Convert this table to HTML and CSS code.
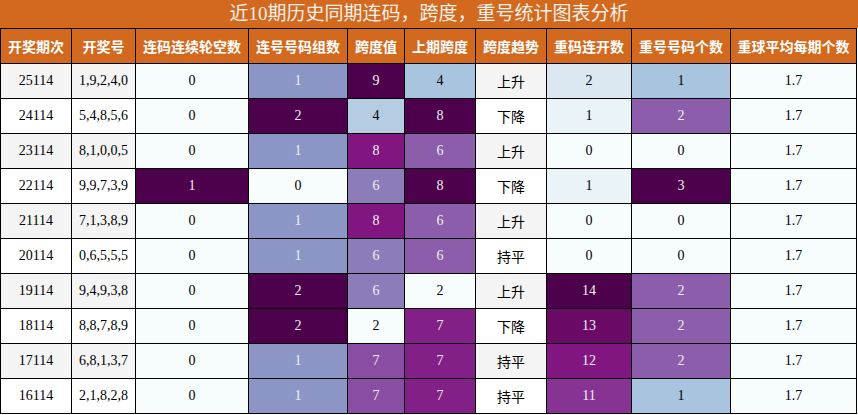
FILE: index.html
```html
<!DOCTYPE html>
<html lang="zh">
<head>
<meta charset="utf-8">
<title>近10期历史同期连码，跨度，重号统计图表分析</title>
<link rel="stylesheet" href="styles.css">
</head>
<body>
<div class="wrap">
  <div class="title">近10期历史同期连码，跨度，重号统计图表分析</div>
  <table class="grid">
    <colgroup>
      <col class="c1"><col class="c2"><col class="c3"><col class="c4"><col class="c5">
      <col class="c6"><col class="c7"><col class="c8"><col class="c9"><col class="c10">
    </colgroup>
    <thead>
      <tr>
        <th>开奖期次</th><th>开奖号</th><th>连码连续轮空数</th><th>连号号码组数</th><th>跨度值</th>
        <th>上期跨度</th><th>跨度趋势</th><th>重码连开数</th><th>重号号码个数</th><th>重球平均每期个数</th>
      </tr>
    </thead>
    <tbody>
      <tr class="odd">
        <td class="s">25114</td><td class="s">1,9,2,4,0</td><td class="b0">0</td><td class="b50 lt">1</td><td class="b100 lt">9</td>
        <td class="b33">4</td><td class="s cjk">上升</td><td class="b14">2</td><td class="b33">1</td><td class="b0">1.7</td>
      </tr>
      <tr>
        <td class="s">24114</td><td class="s">5,4,8,5,6</td><td class="b0">0</td><td class="b100 lt">2</td><td class="b29">4</td>
        <td class="b100 lt">8</td><td class="s cjk">下降</td><td class="b07">1</td><td class="b67 lt">2</td><td class="b0">1.7</td>
      </tr>
      <tr class="odd">
        <td class="s">23114</td><td class="s">8,1,0,0,5</td><td class="b0">0</td><td class="b50 lt">1</td><td class="b86 lt">8</td>
        <td class="b67 lt">6</td><td class="s cjk">上升</td><td class="b0">0</td><td class="b0">0</td><td class="b0">1.7</td>
      </tr>
      <tr>
        <td class="s">22114</td><td class="s">9,9,7,3,9</td><td class="b100 lt">1</td><td class="b0">0</td><td class="b57 lt">6</td>
        <td class="b100 lt">8</td><td class="s cjk">下降</td><td class="b07">1</td><td class="b100 lt">3</td><td class="b0">1.7</td>
      </tr>
      <tr class="odd">
        <td class="s">21114</td><td class="s">7,1,3,8,9</td><td class="b0">0</td><td class="b50 lt">1</td><td class="b86 lt">8</td>
        <td class="b67 lt">6</td><td class="s cjk">上升</td><td class="b0">0</td><td class="b0">0</td><td class="b0">1.7</td>
      </tr>
      <tr>
        <td class="s">20114</td><td class="s">0,6,5,5,5</td><td class="b0">0</td><td class="b50 lt">1</td><td class="b57 lt">6</td>
        <td class="b67 lt">6</td><td class="s cjk">持平</td><td class="b0">0</td><td class="b0">0</td><td class="b0">1.7</td>
      </tr>
      <tr class="odd">
        <td class="s">19114</td><td class="s">9,4,9,3,8</td><td class="b0">0</td><td class="b100 lt">2</td><td class="b57 lt">6</td>
        <td class="b0">2</td><td class="s cjk">上升</td><td class="b100 lt">14</td><td class="b67 lt">2</td><td class="b0">1.7</td>
      </tr>
      <tr>
        <td class="s">18114</td><td class="s">8,8,7,8,9</td><td class="b0">0</td><td class="b100 lt">2</td><td class="b0">2</td>
        <td class="b83 lt">7</td><td class="s cjk">下降</td><td class="b93 lt">13</td><td class="b67 lt">2</td><td class="b0">1.7</td>
      </tr>
      <tr class="odd">
        <td class="s">17114</td><td class="s">6,8,1,3,7</td><td class="b0">0</td><td class="b50 lt">1</td><td class="b71 lt">7</td>
        <td class="b83 lt">7</td><td class="s cjk">持平</td><td class="b86 lt">12</td><td class="b67 lt">2</td><td class="b0">1.7</td>
      </tr>
      <tr>
        <td class="s">16114</td><td class="s">2,1,8,2,8</td><td class="b0">0</td><td class="b50 lt">1</td><td class="b71 lt">7</td>
        <td class="b83 lt">7</td><td class="s cjk">持平</td><td class="b79 lt">11</td><td class="b33">1</td><td class="b0">1.7</td>
      </tr>
    </tbody>
  </table>
</div>
</body>
</html>
```
FILE: styles.css
```css
html, body {
  margin: 0;
  padding: 0;
  background: #ffffff;
}

.wrap {
  width: 858px;
}

.title {
  height: 28px;
  line-height: 28px;
  background: #d2691e;
  color: #f6f0ea;
  text-align: center;
  font-family: "Liberation Serif", "Noto Sans CJK SC", serif;
  font-size: 19px;
}

.grid {
  table-layout: fixed;
  width: 857px;
  border-collapse: separate;
  border-spacing: 1px;
  background: #000000;
  font-family: "Liberation Serif", "Noto Sans CJK SC", serif;
  font-size: 14px;
}

.c1 { width: 70px; }
.c2 { width: 63px; }
.c3 { width: 112px; }
.c4 { width: 98px; }
.c5 { width: 56px; }
.c6 { width: 70px; }
.c7 { width: 70px; }
.c8 { width: 84px; }
.c9 { width: 98px; }
.c10 { width: 125px; }

.grid th {
  height: 34px;
  padding: 0;
  background: #d2691e;
  color: #ffffff;
  font-family: "Noto Sans CJK SC", sans-serif;
  font-weight: 700;
  font-size: 14px;
  text-align: center;
  white-space: nowrap;
}

.grid td {
  height: 34px;
  padding: 0;
  text-align: center;
  color: #000000;
  white-space: nowrap;
}

.grid td.cjk {
  font-family: "Noto Sans CJK SC", sans-serif;
}

.grid td.s { background: #ffffff; }
.grid tr.odd td.s { background: #f4f4f4; }

.grid td.lt { color: #f1f1f1; }

.b0   { background: #f7fcfd; }
.b07  { background: #eaf3f8; }
.b14  { background: #dbe8f2; }
.b29  { background: #b6cce3; }
.b33  { background: #a9c4de; }
.b50  { background: #8c96c6; }
.b57  { background: #8c7dba; }
.b67  { background: #8b5daa; }
.b71  { background: #894da3; }
.b79  { background: #863394; }
.b83  { background: #832087; }
.b86  { background: #821681; }
.b93  { background: #6b0967; }
.b100 { background: #4d004b; }
```
